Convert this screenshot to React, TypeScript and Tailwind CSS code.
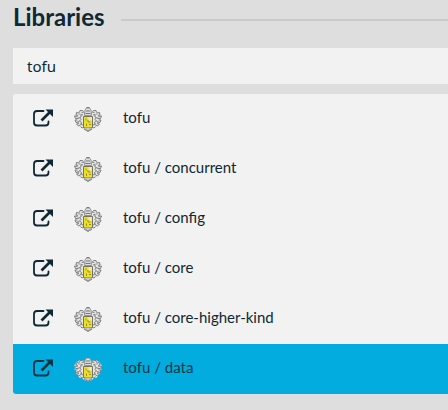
import { clsx } from "clsx";

const libraries = [
  "tofu",
  "tofu / concurrent",
  "tofu / config",
  "tofu / core",
  "tofu / core-higher-kind",
  "tofu / data",
];

const selected = "tofu / data";

function ExternalIcon() {
  return (
    <svg viewBox="0 0 20 18" className="block h-[18px] w-5" fill="none" aria-hidden="true">
      <path
        d="M10.500 2H4Q1 2 1 5v8.500Q1 16.500 4 16.500h8.500Q15.500 16.500 15.500 13.500V12.500"
        stroke="currentColor"
        strokeWidth="1.800"
        strokeLinecap="round"
      />
      <path d="M8.500 11.500 16.500 3.500" stroke="currentColor" strokeWidth="2.700" />
      <path d="M12.500 0.500H20V8Z" fill="currentColor" />
    </svg>
  );
}

function Mantling() {
  return (
    <>
      <path
        d="M11 5 8.500 3 6 3 4 4.500 2 5 1.500 7 0 8.500 1 11 .5 13 2 14.500 2 17 4 18 5 20.500 8 21 10 23 14 24.500V5Z"
        fill="#e6e6e6"
      />
      <path
        d="M10.500 6.500 8.500 3.500 6 3.500 5.500 5.500M5 6 2.500 5.500 2 8 4 8.500M3.500 9.500 .5 9 1.500 11.500 4.500 11.500M3.500 13H1l1 2.500 3-.5M5 16.500l-2.500.5 2 2 2.500-1.500M6.500 19.500l1.500 1.500 2.500-1M9 8 7 7.500v2.500L5.500 10.500l1.500 2-1.500 1.500 2 1.500v2L9 18M10 22l4 2.500"
        stroke="#7d7f81"
        strokeWidth="1"
      />
      <path d="M4.500 7h2M3.500 11h2M3.500 14.500h2M6 17h2M7.500 5.500h2" stroke="#929496" strokeWidth="1" />
    </>
  );
}

function Crest() {
  return (
    <svg viewBox="0 0 28 25" className="block h-[25px] w-7" fill="none" aria-hidden="true">
      <Mantling />
      <g transform="translate(28 0) scale(-1 1)">
        <Mantling />
      </g>
      <path d="M10.500 8.500 11 3 12.500 1h3L17 3l.5 5.500Z" fill="#dedede" stroke="#909293" />
      <path d="M12.500 .5h3M12 4h4M11.500 6.500h5" stroke="#77797b" />
      <path
        d="M9.500 9.500h9V20q0 1-2 1h-5q-2 0-2-1Z"
        fill="#ece02c"
        stroke="#74745a"
      />
      <path d="M14.500 10h3.500v3.500h-3.500Z" fill="#e8e8d8" />
      <path d="M12 11.500v2M14 13v2h2.500M12.500 16.500v2.500M15 17.500h2" stroke="#98911f" />
      <path d="M11 21.500q3 4 6 0" fill="#dedede" stroke="#8b8d8f" />
    </svg>
  );
}

export default function App() {
  return (
    <main className="min-h-screen bg-[#dedede] pl-[13px] pb-4 font-['Lato',sans-serif] text-[#0f2834]">
      <header className="flex h-12 items-start gap-4">
        <h1 className="pt-[3px] text-2xl leading-7 font-bold">Libraries</h1>
        <div className="mt-[19px] h-0.5 flex-1 bg-[#c8cbca]" />
      </header>
      <input
        type="text"
        aria-label="Search libraries"
        defaultValue="tofu"
        className="block h-9 w-full bg-[#f2f2f2] px-3.5 font-['Noto_Sans',sans-serif] text-[15px] outline-none"
      />
      <ul className="mt-2.5 overflow-hidden rounded-l-[3px] bg-[#f2f2f2]">
        {libraries.map((name) => (
          <li key={name}>
            <a
              href="#"
              className={clsx(
                "flex h-[50px] items-center pl-5",
                name === selected && "bg-[#02acde] text-[#083544]",
              )}
            >
              <span className="mr-[21px] -mt-0.5">
                <ExternalIcon />
              </span>
              <Crest />
              <span className="ml-[21px] pb-1 text-[15px] leading-5">{name}</span>
            </a>
          </li>
        ))}
      </ul>
    </main>
  );
}
